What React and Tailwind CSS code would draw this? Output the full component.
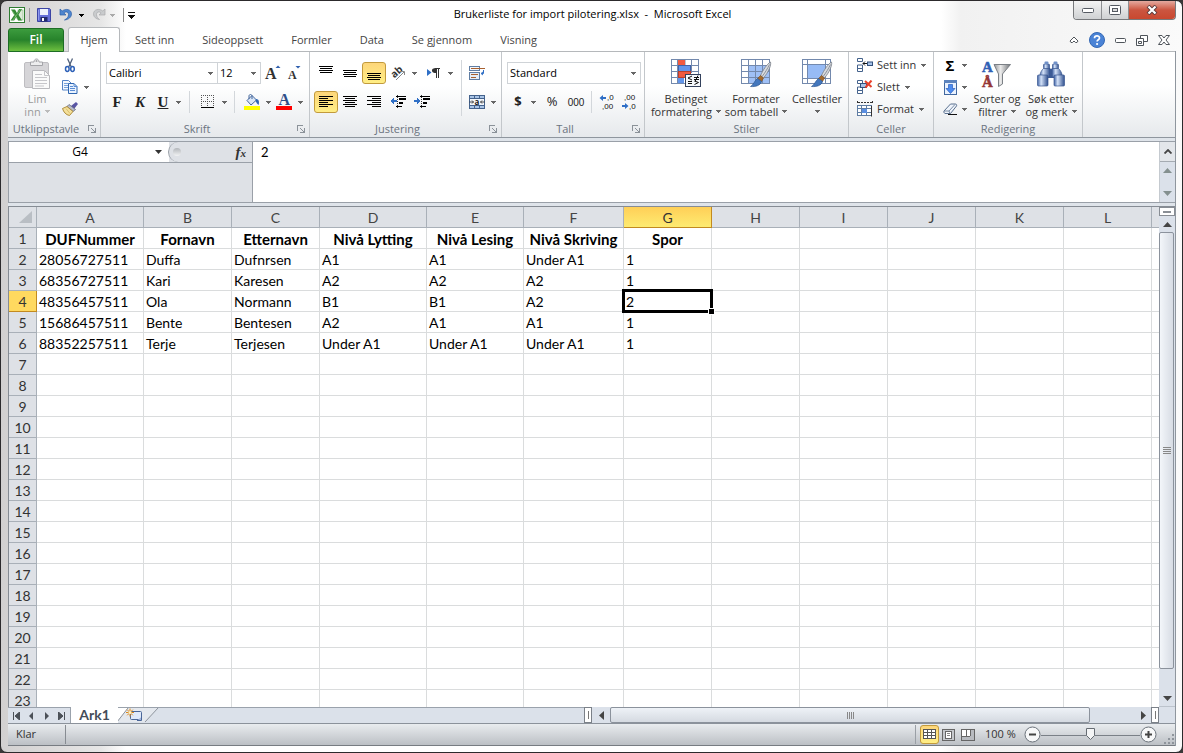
import React from "react";

const Caret = ({ className = "text-[#666]" }) => (
  <svg viewBox="0 0 5 3" shapeRendering="crispEdges" className={"h-[3px] w-[5px] shrink-0 " + className} aria-hidden="true">
    <path d="M0 0h5v1H4v1H3v1H2V2H1V1H0z" fill="currentColor" />
  </svg>
);

const Tri = ({ dir }) => {
  const d = { up: "M4.500 1L9 6H0z", down: "M0 1h9L4.500 6z", left: "M6 0v9L1 4.500z", right: "M1 0v9l5-4.500z" }[dir];
  return (
    <svg width="9" height="9" viewBox={dir === "up" || dir === "down" ? "0 -1 9 9" : "-1 0 9 9"} aria-hidden="true">
      <path d={d} fill="currentColor" />
    </svg>
  );
};

const Tool = ({ label, className = "w-6", active, children }) => (
  <button
    type="button"
    aria-label={label}
    className={
      "flex h-[22px] shrink-0 items-center justify-center rounded-[3px] border " +
      (active ? "border-[#c29a3c] bg-linear-to-b from-[#fdd67a] to-[#ffee85] " : "border-transparent ") +
      className
    }
  >
    {children}
  </button>
);

const Drop = ({ label }) => (
  <button type="button" aria-label={label} className="flex h-[22px] w-2 shrink-0 items-center justify-center">
    <Caret />
  </button>
);

const Sep = ({ className }) => (
  <div className={"flex h-[22px] shrink-0 justify-center " + className}>
    <div className="w-px bg-[#d3d7db]" />
  </div>
);

const Group = ({ title, launcher, className, pad = "", children }) => (
  <section className={"flex shrink-0 flex-col border-r border-[#c3c7cb] " + className}>
    <div className={"flex h-[69px] " + pad}>{children}</div>
    <div className="flex h-4 items-center">
      <span className="flex-1 text-center whitespace-nowrap text-[#6b7480]">{title}</span>
      {launcher && (
        <button type="button" aria-label={title + " innstillinger"} className="flex w-4 justify-center">
          <svg width="8" height="8" viewBox="0 0 8 8" shapeRendering="crispEdges">
            <path d="M0.500 6V0.500H6M3 3l4 4M7.500 3v4.500H3" fill="none" stroke="#8b9299" />
          </svg>
        </button>
      )}
    </div>
  </section>
);

const Big = ({ icon, a, b, drop, className, muted }) => (
  <button type="button" className={"flex shrink-0 flex-col items-center pt-1 leading-[13px] whitespace-nowrap " + className + (muted ? " text-[#9a9a9a]" : " text-[#333]")}>
    <span className="flex h-9 items-center">{icon}</span>
    <span>{a}</span>
    <span className="flex h-[13px] items-center gap-1">
      {b}
      {drop && <Caret className={muted ? "text-[#bbb]" : "text-[#666]"} />}
    </span>
  </button>
);

const Select = ({ label, value, className }) => (
  <div className={"flex h-[22px] items-center border border-[#cfd3d7] bg-white pr-1 " + className}>
    <select aria-label={label} defaultValue={value} className="-mr-2 min-w-0 flex-1 appearance-none bg-transparent pl-[2px] text-[11px] text-black outline-none">
      <option>{value}</option>
    </select>
    <span className="pointer-events-none"><Caret /></span>
  </div>
);

const Lines = ({ rows, y = 2 }) => (
  <svg width="16" height="16" viewBox="0 0 16 16" shapeRendering="crispEdges">
    {rows.map(([x, w], i) => (
      <rect key={i} x={x} y={y + i * 2} width={w} height="1" fill="#000" />
    ))}
  </svg>
);

const brushStroke = (
  <>
    <path d="M30.500 3c1 3-2 10-7 16l-3-2.500C23 11 27 5 30.500 3z" fill="#d8dbe0" stroke="#777d86" strokeWidth="0.800" />
    <path d="M29.500 5.500c-2 4-4 7.500-7 11.500" stroke="#8d929a" fill="none" />
    <path d="M20.500 16.500l3 2.500-2 3.500-4-3z" fill="#a36a2d" stroke="#7a4c1c" strokeWidth="0.600" />
    <path d="M17.500 19.500l4 3c-1 4-6 5.500-11 5 3-1.500 4-6 7-8z" fill="#4377bd" stroke="#2e5791" strokeWidth="0.700" />
  </>
);

const I = {
  excel: (
    <svg width="16" height="16" viewBox="0 0 16 16">
      <rect x="0.500" y="0.500" width="15" height="15" fill="#fff" stroke="#2f7d32" />
      <rect x="9" y="3" width="5" height="10" fill="#dcebd8" stroke="#7eaf79" strokeWidth="0.600" />
      <path d="M2 2.500h4l2 3.400 2.200-3.900H13L9.500 7.800 13 13.500H9.300L7.200 10l-2 3.500H1.500L5.300 8z" fill="#348a35" />
      <path d="M3 3.500L8.500 12.500M11.500 2.500L4 13" stroke="#8bc47f" strokeWidth="0.700" />
    </svg>
  ),
  save: (
    <svg width="14" height="14" viewBox="0 0 14 14">
      <path d="M0.500 0.500h12l1 1v12h-13z" fill="#6570d8" stroke="#3c44a4" />
      <rect x="3" y="1" width="8" height="6" fill="#edf2fb" />
      <rect x="3.500" y="9" width="7" height="4.500" fill="#222a6a" />
      <rect x="5" y="10" width="2" height="3" fill="#fff" />
      <path d="M1.500 2v10" stroke="#8f97ea" />
    </svg>
  ),
  undo: (
    <svg width="14" height="14" viewBox="0 0 14 14">
      <path d="M1 1v6h6L4.900 4.900C7 3 9.500 4 9.500 6.500c0 2.500-1.500 4-4 5.500 4.500-.5 7-3 7-6.200C12.500 1.500 7 0 3.200 3z" fill="#4f86cf" stroke="#2d5ea8" strokeWidth="0.700" />
    </svg>
  ),
  redo: (
    <svg width="14" height="14" viewBox="0 0 14 14">
      <path d="M13 1v6H7l2.100-2.100C7 3 4.500 4 4.500 6.500c0 2.500 1.500 4 3 5C4 11 1.500 9 1.500 5.800 1.500 1.500 7 0 10.800 3z" fill="#c9cbcd" stroke="#a9abad" strokeWidth="0.700" />
    </svg>
  ),
  paste: (
    <svg width="28" height="32" viewBox="0 0 28 32">
      <rect x="1.500" y="4.500" width="24" height="25" rx="1.500" fill="#d6d5d8" stroke="#bebdc1" />
      <path d="M7.500 7.500V4h3.500c0-4 5-4 5 0h3.500v3.500z" fill="#ededee" stroke="#a4a4a8" />
      <circle cx="13.500" cy="3" r="1" fill="#a4a4a8" />
      <path d="M9.500 12.500h12l5 5v13h-17z" fill="#fafafa" stroke="#b9b9bd" />
      <path d="M21.500 12.500v5h5M12 16.500h7M12 19.500h12M12 22.500h12M12 25.500h12M12 28h9" fill="none" stroke="#c6c6ca" />
    </svg>
  ),
  cut: (
    <svg width="12" height="15" viewBox="0 0 12 15">
      <path d="M3.500 0.500l3.800 8.500M8.500 0.500L4.700 9" stroke="#51617c" strokeWidth="1.300" fill="none" />
      <ellipse cx="3.300" cy="11" rx="1.800" ry="2.400" fill="none" stroke="#2f62b8" strokeWidth="1.500" />
      <ellipse cx="8.500" cy="11" rx="1.800" ry="2.400" fill="none" stroke="#2f62b8" strokeWidth="1.500" />
    </svg>
  ),
  copy: (
    <svg width="16" height="14" viewBox="0 0 16 14">
      <path d="M0.500 0.500h6l2.500 2.500v7h-8.500z" fill="#f3f8ff" stroke="#5584c6" />
      <path d="M2 3.500h4M2 5.500h4M2 7.500h4" stroke="#79a3dc" />
      <path d="M6.500 3.500h5.500l3 3v7H6.500z" fill="#eaf3ff" stroke="#2f66b0" />
      <path d="M8 6.500h3M8 8.500h5M8 10.500h5M12 3.500v3h3" stroke="#5b8dd4" fill="none" />
    </svg>
  ),
  brush: (
    <svg width="16" height="14" viewBox="0 0 16 14">
      <path d="M9 4l5-4 2 2-4 5z" fill="#5955a3" />
      <path d="M7 2.500l6.500 5L11 9.500 5 4.500z" fill="#b9bcc9" stroke="#5f6478" strokeWidth="0.800" />
      <path d="M5 4.500L11 9.500 7.500 13.500C4 13 1.500 10 0.500 6.500z" fill="#f4e09a" stroke="#a88430" strokeWidth="0.900" />
      <path d="M4 6.500l4 5" stroke="#c9a44c" strokeWidth="0.600" />
    </svg>
  ),
  borders: (
    <svg width="14" height="14" viewBox="0 0 14 14" shapeRendering="crispEdges">
      <path d="M0.500 0v12M6.500 0v12M12.500 0v12M0 0.500h13M0 6.500h13" stroke="#555" strokeDasharray="1 1" fill="none" />
      <rect y="12" width="13" height="1" fill="#000" />
    </svg>
  ),
  fill: (
    <svg width="16" height="16" viewBox="0 0 16 16">
      <path d="M3 6.500L8 1.500 12.500 6 7 11z" fill="#d9e6f7" stroke="#44679c" />
      <path d="M5 5V2c0-2 3-2 3 0v3" fill="none" stroke="#44679c" />
      <path d="M12 5c3 0 3.500 3 2.500 6-1-1-2-2-3-4z" fill="#2f67b5" />
      <rect y="12" width="16" height="4" fill="#ffff00" />
    </svg>
  ),
  orient: (
    <svg width="16" height="16" viewBox="0 0 16 16" className="overflow-visible">
      <text x="1" y="11" fontSize="10" fontWeight="700" fontFamily="Open Sans, sans-serif" transform="rotate(-42 6 8)" fill="#333">ab</text>
      <path d="M6 15L14 7M14.500 10V6.500H11" stroke="#888" fill="none" />
    </svg>
  ),
  para: (
    <svg width="14" height="12" viewBox="0 0 14 12">
      <path d="M0 2l4.500 3.500L0 9z" fill="#2f6fc6" />
      <path d="M8 1.500h5M9.500 2v9M11.500 2v9" stroke="#333" />
      <path d="M9.500 1C6 1 5 2 5 3.700 5 5.500 6.500 6 9.500 6z" fill="#333" />
    </svg>
  ),
  indentOut: (
    <svg width="16" height="14" viewBox="0 0 16 14" shapeRendering="crispEdges">
      <path d="M6 1.500h10M9 3.500h7M9 4.500h7M9 7.500h4M9 8.500h4M6 11.500h6" stroke="#000" />
      <path d="M7.500 0v14" stroke="#333" strokeDasharray="1 1" />
      <path d="M0 6l4-3v2h3v2H4v2z" fill="#2f6fc6" />
    </svg>
  ),
  indentIn: (
    <svg width="16" height="14" viewBox="0 0 16 14" shapeRendering="crispEdges">
      <path d="M6 1.500h10M9 3.500h7M9 4.500h7M9 7.500h4M9 8.500h4M6 11.500h6" stroke="#000" />
      <path d="M7.500 0v14" stroke="#333" strokeDasharray="1 1" />
      <path d="M7 6L3 3v2H0v2h3v2z" fill="#2f6fc6" />
    </svg>
  ),
  wrap: (
    <svg width="17" height="16" viewBox="0 0 17 16">
      <rect x="0.500" y="1.500" width="10" height="4" fill="#f4f7fb" stroke="#5f7da3" />
      <path d="M2 3.500h14" stroke="#a8602f" />
      <path d="M14.500 5v3.500H12.500M14 7l-2 1.500 2 1.500" stroke="#2f6fc6" fill="none" />
      <rect x="0.500" y="7.500" width="10" height="7" fill="#e3edf8" stroke="#5f7da3" />
      <path d="M2 9.500h7M2 12.500h5" stroke="#a8602f" />
    </svg>
  ),
  merge: (
    <svg width="16" height="14" viewBox="0 0 16 14" className="overflow-visible">
      <rect x="0.500" y="0.500" width="15" height="13" fill="#a9c4e6" stroke="#44628c" />
      <path d="M5.500 1v2M10.500 1v2M5.500 11v2M10.500 11v2M1 3.500h14M1 10.500h14" stroke="#44628c" />
      <rect x="1" y="4" width="14" height="6" fill="#f2f6fb" />
      <path d="M0.500 7h4M11.500 7h4M3 5.500L4.500 7 3 8.500M13 5.500L11.500 7 13 8.500" stroke="#333" fill="none" strokeWidth="0.900" />
      <text x="8" y="9.500" textAnchor="middle" fontSize="8" fontWeight="700" fontFamily="Open Sans, sans-serif" fill="#222">a</text>
    </svg>
  ),
  decMore: (
    <svg width="17" height="16" viewBox="0 0 17 16" className="overflow-visible">
      <path d="M0.500 4l3.500-3v2h3v2H4v2z" fill="#2f6fc6" />
      <text x="8" y="6" fontSize="8" fontFamily="Liberation Sans, sans-serif" fill="#111">,0</text>
      <text x="3" y="15" fontSize="8" fontFamily="Liberation Sans, sans-serif" fill="#111">,00</text>
    </svg>
  ),
  decLess: (
    <svg width="17" height="16" viewBox="0 0 17 16" className="overflow-visible">
      <path d="M7.500 12L4 9v2H1v2h3v2z" fill="#2f6fc6" />
      <text x="3" y="6" fontSize="8" fontFamily="Liberation Sans, sans-serif" fill="#111">,00</text>
      <text x="8" y="15" fontSize="8" fontFamily="Liberation Sans, sans-serif" fill="#111">,0</text>
    </svg>
  ),
  cond: (
    <svg width="32" height="30" viewBox="0 0 32 30">
      <rect x="1.500" y="0.500" width="27" height="24" fill="#fff" stroke="#7389ad" />
      <path d="M7.500 0v25M15 0.500v6M21.500 0v14M1 6.500h28M1 12.500h28M1 18.500h14" stroke="#7389ad" fill="none" />
      <rect x="8" y="1" width="7" height="5" fill="#f05a40" />
      <rect x="8.500" y="6.500" width="12" height="6" fill="#6295ea" stroke="#3f62a8" />
      <rect x="8.500" y="12.500" width="12" height="6" fill="#f05a40" stroke="#b8402c" />
      <rect x="8" y="19" width="6" height="5" fill="#6295ea" />
      <rect x="15.500" y="15.500" width="15" height="12" fill="#f5f8fc" stroke="#33415c" />
      <path d="M22 17l-4 2 4 2M18 22.500h4M18 24.500h4M24 18.500h5M24 20.500h5M28 16.500l-3 6M24.500 22l4 1.500-4 2" stroke="#111" fill="none" />
    </svg>
  ),
  tableFmt: (
    <svg width="32" height="30" viewBox="0 0 32 30">
      <rect x="1.500" y="0.500" width="28" height="24" fill="#fff" stroke="#7389ad" />
      <rect x="8" y="7" width="21" height="17" fill="#9fc0f6" />
      <path d="M8.500 0v25M15.500 0v25M22.500 0v25M1 6.500h28M1 12.500h28M1 18.500h28" stroke="#7389ad" fill="none" />
      {brushStroke}
    </svg>
  ),
  cellStyle: (
    <svg width="32" height="30" viewBox="0 0 32 30">
      <rect x="1.500" y="0.500" width="28" height="24" fill="#fff" stroke="#7389ad" />
      <path d="M6.500 0v25M24.500 0v25M1 5.500h28M1 19.500h28" stroke="#7389ad" fill="none" />
      <rect x="7" y="6" width="17" height="13" fill="#97bbf5" />
      {brushStroke}
    </svg>
  ),
  insert: (
    <svg width="16" height="14" viewBox="0 0 16 14">
      <path d="M0.500 0.500h5v3h-5zM0.500 10.500h5v3h-5zM0.500 7h5v3.500h-5z" fill="#fff" stroke="#44628c" />
      <path d="M6 5.500h4M8 3.500L6 5.500l2 2" stroke="#111" fill="none" />
      <rect x="10.500" y="4" width="5" height="3.500" fill="#a7c3e8" stroke="#33517c" />
    </svg>
  ),
  remove: (
    <svg width="16" height="14" viewBox="0 0 16 14">
      <path d="M0.500 0.500h5v3h-5zM0.500 10.500h5v3h-5zM0.500 7h5v3.500h-5z" fill="#fff" stroke="#44628c" />
      <rect x="3.500" y="3.500" width="6" height="4" fill="#a7c3e8" stroke="#33517c" />
      <path d="M8 1l6.500 6M14.500 0.500L8.500 7.500" stroke="#e8402a" strokeWidth="2" />
    </svg>
  ),
  format: (
    <svg width="16" height="16" viewBox="0 0 16 16">
      <path d="M1 1.500h14M0.500 0v3M15.500 0v3" stroke="#333" strokeDasharray="2 1" />
      <rect x="0.500" y="4.500" width="14" height="10" fill="#fff" stroke="#5f7da3" />
      <path d="M4.500 4v11M9.500 4v11M0 7.500h15M0 11.500h15" stroke="#5f7da3" />
      <rect x="5" y="8" width="5" height="4" fill="#5b8fe2" />
      <path d="M14.500 5v10.500" stroke="#333" />
    </svg>
  ),
  fillDown: (
    <svg width="13" height="15" viewBox="0 0 13 15">
      <rect x="0.500" y="0.500" width="12" height="14" fill="#eaf2fd" stroke="#42689f" />
      <rect x="0" y="0" width="13" height="3" fill="#5c83bd" />
      <path d="M4.500 4.500h4v4H11l-4.500 5-4.500-5h2.500z" fill="#4c8bef" stroke="#2a5fbe" strokeWidth="0.700" />
    </svg>
  ),
  eraser: (
    <svg width="15" height="13" viewBox="0 0 15 13">
      <path d="M1 8l6.500-7h5c1 0 1.500 1 1 2L7.500 10.500 2 10.500C1 10 0.500 9 1 8z" fill="#eff4fb" stroke="#5b718f" />
      <path d="M1 8h5l6-6.500M6 8l1 2.500" stroke="#5b718f" fill="none" strokeWidth="0.800" />
      <path d="M5 11.500h9" stroke="#111" />
    </svg>
  ),
  sort: (
    <svg width="32" height="30" viewBox="0 0 32 30" className="overflow-visible">
      <defs>
        <linearGradient id="funnel" x1="0" x2="1" y1="0" y2="0">
          <stop offset="0" stopColor="#8f9296" />
          <stop offset="0.400" stopColor="#ececec" />
          <stop offset="1" stopColor="#6f7276" />
        </linearGradient>
      </defs>
      <path d="M13 5.500h16.500l-8 9.500v10l-4 2.500V15z" fill="url(#funnel)" stroke="#7b8086" />
      <text x="1" y="13" fontSize="15" fontWeight="700" fontFamily="Liberation Serif, serif" fill="#2f5fb4" stroke="#2f5fb4" strokeWidth="0.500">A</text>
      <text x="1" y="28" fontSize="15" fontWeight="700" fontFamily="Liberation Serif, serif" fill="#943636" stroke="#943636" strokeWidth="0.500">Å</text>
    </svg>
  ),
  find: (
    <svg width="28" height="26" viewBox="0 0 28 26">
      <defs>
        <linearGradient id="barrel" x1="0" x2="1" y1="0" y2="0">
          <stop offset="0" stopColor="#3f62a4" />
          <stop offset="0.350" stopColor="#d3e1f7" />
          <stop offset="1" stopColor="#2f4f8e" />
        </linearGradient>
      </defs>
      <path d="M11 8h6v9h-6z" fill="#3c5c98" />
      <path d="M7 7h6v9H2.500C3 12 4.500 9 7 7z" fill="url(#barrel)" stroke="#3a5890" strokeWidth="0.700" />
      <path d="M21 7h-6v9h10.500C25 12 23.500 9 21 7z" fill="url(#barrel)" stroke="#3a5890" strokeWidth="0.700" />
      <rect x="6.500" y="3" width="6" height="4.500" rx="1" fill="url(#barrel)" stroke="#3a5890" strokeWidth="0.700" />
      <rect x="15.500" y="3" width="6" height="4.500" rx="1" fill="url(#barrel)" stroke="#3a5890" strokeWidth="0.700" />
      <rect x="7.500" y="0.500" width="4" height="2.500" rx="1" fill="#6f90c8" />
      <rect x="16.500" y="0.500" width="4" height="2.500" rx="1" fill="#6f90c8" />
      <rect x="0.500" y="14" width="10.500" height="11" rx="1" fill="url(#barrel)" stroke="#3a5890" strokeWidth="0.700" />
      <rect x="17" y="14" width="10.500" height="11" rx="1" fill="url(#barrel)" stroke="#3a5890" strokeWidth="0.700" />
    </svg>
  ),
};

const columns = ["A", "B", "C", "D", "E", "F", "G", "H", "I", "J", "K", "L"];
const widths = ["w-[107px]", "w-[88px]", "w-[88px]", "w-[107px]", "w-[97px]", "w-[100px]", "w-[88px]", "w-[88px]", "w-[88px]", "w-[88px]", "w-[88px]", "w-[88px]"];
const data = [
  ["DUFNummer", "Fornavn", "Etternavn", "Nivå Lytting", "Nivå Lesing", "Nivå Skriving", "Spor"],
  ["28056727511", "Duffa", "Dufnrsen", "A1", "A1", "Under A1", "1"],
  ["68356727511", "Kari", "Karesen", "A2", "A2", "A2", "1"],
  ["48356457511", "Ola", "Normann", "B1", "B1", "A2", "2"],
  ["15686457511", "Bente", "Bentesen", "A2", "A1", "A1", "1"],
  ["88352257511", "Terje", "Terjesen", "Under A1", "Under A1", "Under A1", "1"],
];
const rowNumbers = Array.from({ length: 23 }, (_, i) => i + 1);

function TitleBar() {
  const winBtn = "flex h-full items-center justify-center border-r border-[#8d8f92] bg-linear-to-b from-[#f4f4f4] to-[#cfd1d3]";
  return (
    <header className="flex h-[26px] items-start">
      <div className="flex h-[27px] flex-1 items-center pt-px pl-px">
        {I.excel}
        <div className="mr-[7px] ml-1 h-3.5 w-px bg-[#999]" />
        <button type="button" aria-label="Lagre">{I.save}</button>
        <button type="button" aria-label="Angre" className="ml-2">{I.undo}</button>
        <button type="button" aria-label="Angre-liste" className="ml-1.5"><Caret className="text-black" /></button>
        <button type="button" aria-label="Gjør om" className="ml-2">{I.redo}</button>
        <button type="button" aria-label="Gjør om-liste" className="ml-1"><Caret className="text-[#aaa]" /></button>
        <div className="mr-1 ml-2 h-3.5 w-px bg-[#888]" />
        <button type="button" aria-label="Tilpass verktøylinje">
          <svg width="7" height="7" viewBox="0 0 7 7" shapeRendering="crispEdges"><path d="M0 0h7v1H0zM0 3h7L3.500 7z" fill="#111" /></svg>
        </button>
      </div>
      <h1 className="pt-[5px] text-[11px] leading-4 whitespace-pre text-black">Brukerliste for import pilotering.xlsx  -  Microsoft Excel</h1>
      <div className="flex flex-1 justify-end">
        <div className="flex h-[19px] w-[103px] overflow-hidden rounded-b-[4px] border border-t-0 border-[#77797c]">
          <button type="button" aria-label="Minimer" className={"w-7 " + winBtn}>
            <svg width="12" height="5" viewBox="0 0 12 5"><rect x="0.500" y="0.500" width="11" height="4" rx="1" fill="#fff" stroke="#555a62" /></svg>
          </button>
          <button type="button" aria-label="Maksimer" className={"w-[27px] " + winBtn}>
            <svg width="12" height="10" viewBox="0 0 12 10"><rect x="0.500" y="0.500" width="11" height="9" rx="1" fill="#fff" stroke="#555a62" /><rect x="3.500" y="3.500" width="5" height="3" fill="#ddd" stroke="#555a62" /></svg>
          </button>
          <button type="button" aria-label="Lukk" className="flex flex-1 items-center justify-center bg-linear-to-b from-[#e3a99f] via-[#cb5540] to-[#c9482f]">
            <svg width="12" height="10" viewBox="0 0 12 10"><path d="M2 1l8 8M10 1L2 9" stroke="#5b3a3a" strokeWidth="4" /><path d="M2.500 1.500l7 7M9.500 1.500l-7 7" stroke="#fff" strokeWidth="2.200" /></svg>
          </button>
        </div>
      </div>
    </header>
  );
}

function Tabs() {
  return (
    <nav className="relative z-10 -mb-px flex h-[25px] items-end">
      <button type="button" className="mr-1 h-6 w-14 rounded-t-[3px] border border-[#1d6d24] bg-linear-to-b from-[#3c9c3e] via-[#27832b] to-[#6cbf3f] text-[12px] font-semibold text-white">Fil</button>
      <button type="button" className="mr-px h-[25px] w-[52px] rounded-t-[3px] border border-b-0 border-[#b5b8bb] bg-white">Hjem</button>
      {["Sett inn", "Sideoppsett", "Formler", "Data", "Se gjennom", "Visning"].map((t) => (
        <button key={t} type="button" className="h-[25px] px-3.5 pt-px">{t}</button>
      ))}
      <div className="ml-auto flex h-6 items-center gap-2.5 pr-1.5">
        <button type="button" aria-label="Minimer båndet"><svg width="10" height="8" viewBox="0 0 10 8"><path d="M5 1l4 4-1 1.500H6.500L5 5 3.500 6.500H2L1 5z" fill="#fff" stroke="#4f545a" /></svg></button>
        <button type="button" aria-label="Hjelp">
          <svg width="16" height="16" viewBox="0 0 16 16"><circle cx="8" cy="8" r="7.500" fill="#4a83d6" stroke="#3468b4" /><path d="M5.500 6.200c0-3 5-3 5-.2 0 1.800-2.400 1.800-2.400 3.600" stroke="#fff" strokeWidth="1.700" fill="none" /><circle cx="8.100" cy="12" r="1.100" fill="#fff" /></svg>
        </button>
        <button type="button" aria-label="Minimer arbeidsbok"><svg width="11" height="5" viewBox="0 0 11 5"><rect x="0.500" y="0.500" width="10" height="4" rx="1" fill="#fff" stroke="#4f545a" /></svg></button>
        <button type="button" aria-label="Gjenopprett arbeidsbok"><svg width="12" height="11" viewBox="0 0 12 11"><path d="M4.500 0.500h7v6h-7z" fill="#fff" stroke="#4f545a" /><path d="M0.500 3.500h7v7h-7z" fill="#fff" stroke="#4f545a" /><path d="M2.500 6.500h3v2h-3z" fill="none" stroke="#4f545a" /></svg></button>
        <button type="button" aria-label="Lukk arbeidsbok"><svg width="12" height="10" viewBox="0 0 12 10"><path d="M0.500 0.500h3.500L6 3l2-2.500h3.500L8 5l3.500 4.500H8L6 7 4 9.500H0.500L4 5z" fill="#fff" stroke="#4f545a" /></svg></button>
      </div>
    </nav>
  );
}

function Ribbon() {
  const rows = "flex flex-col gap-[7px] pt-[10px]";
  return (
    <div className="flex h-[87px] border-t border-b border-t-[#b5b8bb] border-b-[#8f969e] bg-linear-to-b from-white from-40% to-[#e6e9ec]">
      <Group title="Utklippstavle" launcher className="w-[93px]">
        <Big icon={I.paste} a="Lim" b="inn" drop muted className="ml-2 w-[42px]" />
        <div className="flex flex-col pt-[2px]">
          <div className="flex"><Tool label="Klipp ut">{I.cut}</Tool></div>
          <div className="flex"><Tool label="Kopier">{I.copy}</Tool><Drop label="Kopier-valg" /></div>
          <div className="flex"><Tool label="Kopier format">{I.brush}</Tool></div>
        </div>
      </Group>

      <Group title="Skrift" launcher className="w-[209px]" pad="pl-[5px]">
        <div className={rows}>
          <div className="flex">
            <Select label="Skrift" value="Calibri" className="w-[112px]" />
            <Select label="Skriftstørrelse" value="12" className="-ml-px w-[44px]" />
            <Tool label="Større skrift" className="ml-px w-[22px]">
              <svg width="16" height="16" viewBox="0 0 16 16" className="overflow-visible"><text x="0" y="14" fontSize="16" fontWeight="700" fontFamily="Liberation Serif, serif" fill="#333">A</text><path d="M10.500 3L13 0.500 15.500 3z" fill="#2f5fae" /></svg>
            </Tool>
            <Tool label="Mindre skrift" className="w-5">
              <svg width="14" height="16" viewBox="0 0 14 16" className="overflow-visible"><text x="1" y="14" fontSize="12" fontWeight="700" fontFamily="Liberation Serif, serif" fill="#333">A</text><path d="M8.500 1h5L11 3.500z" fill="#2f5fae" /></svg>
            </Tool>
          </div>
          <div className="flex font-['Liberation_Serif',serif] text-[15px] leading-5 font-bold text-[#222]">
            <Tool label="Fet" className="w-[22px]">F</Tool>
            <Tool label="Kursiv"><i>K</i></Tool>
            <Tool label="Understreking" className="w-[22px]"><u>U</u></Tool>
            <Drop label="Understrekingsvalg" />
            <Sep className="w-3.5" />
            <Tool label="Kantlinjer">{I.borders}</Tool>
            <Drop label="Kantlinjevalg" />
            <Sep className="w-3" />
            <Tool label="Fyllfarge">{I.fill}</Tool>
            <Drop label="Fyllfargevalg" />
            <Tool label="Skriftfarge">
              <svg width="16" height="16" viewBox="0 0 16 16" className="overflow-visible"><text x="2.500" y="11" fontSize="16" fontWeight="700" fontFamily="Liberation Serif, serif" fill="#2f4f8a">A</text><rect y="12" width="16" height="4" fill="#f00" /></svg>
            </Tool>
            <Drop label="Skriftfargevalg" />
          </div>
        </div>
      </Group>

      <Group title="Justering" launcher className="w-48" pad="pl-1">
        <div className={rows + " w-[144px]"}>
          <div className="flex">
            <Tool label="Toppjuster"><Lines y={1} rows={[[1, 14], [2, 12], [1, 14], [2, 12]]} /></Tool>
            <Tool label="Midtjuster loddrett"><Lines y={5} rows={[[1, 14], [2, 12], [1, 14], [2, 12]]} /></Tool>
            <Tool label="Bunnjuster" active><Lines y={8} rows={[[1, 14], [2, 12], [1, 14], [2, 12]]} /></Tool>
            <Tool label="Retning">{I.orient}</Tool>
            <Drop label="Retningsvalg" />
            <Tool label="Tekstretning" className="ml-1 w-6">{I.para}</Tool>
            <Drop label="Tekstretningsvalg" />
          </div>
          <div className="flex">
            <Tool label="Venstrejuster" active><Lines rows={[[1, 14], [1, 9], [1, 14], [1, 9], [1, 14], [1, 9]]} /></Tool>
            <Tool label="Midtstill"><Lines rows={[[1, 14], [3, 10], [1, 14], [3, 10], [1, 14], [3, 10]]} /></Tool>
            <Tool label="Høyrejuster"><Lines rows={[[1, 14], [6, 9], [1, 14], [6, 9], [1, 14], [6, 9]]} /></Tool>
            <Tool label="Mindre innrykk">{I.indentOut}</Tool>
            <Tool label="Mer innrykk">{I.indentIn}</Tool>
          </div>
        </div>
        <div className="mt-2 mr-[3px] ml-[3px] h-14 w-px bg-[#d3d7db]" />
        <div className={rows}>
          <Tool label="Bryt tekst">{I.wrap}</Tool>
          <div className="flex"><Tool label="Slå sammen">{I.merge}</Tool><Drop label="Slå sammen-valg" /></div>
        </div>
      </Group>

      <Group title="Tall" launcher className="w-[143px]" pad="pl-[5px]">
        <div className={rows}>
          <Select label="Tallformat" value="Standard" className="w-[134px]" />
          <div className="flex text-[#222]">
            <Tool label="Valuta" className="w-[22px]"><b className="text-[13px]">$</b></Tool>
            <Drop label="Valutavalg" />
            <Tool label="Prosent" className="ml-px w-7"><span className="text-[13px]">%</span></Tool>
            <Tool label="Tusenskille" className="w-5"><span className="font-['Liberation_Sans',sans-serif] text-[10px]">000</span></Tool>
            <Sep className="w-2.5" />
            <Tool label="Flere desimaler" className="w-[22px]">{I.decMore}</Tool>
            <Tool label="Færre desimaler" className="w-[22px]">{I.decLess}</Tool>
          </div>
        </div>
      </Group>

      <Group title="Stiler" className="w-[204px]" pad="pl-1">
        <Big icon={I.cond} a="Betinget" b="formatering" drop className="w-[74px]" />
        <Big icon={I.tableFmt} a="Formater" b="som tabell" drop className="w-[66px]" />
        <Big icon={I.cellStyle} a="Cellestiler" b="" drop className="w-14" />
      </Group>

      <Group title="Celler" className="w-[85px]" pad="pl-2">
        <div className="flex flex-col pt-[2px] text-[#333]">
          {[["Sett inn", I.insert], ["Slett", I.remove], ["Format", I.format]].map(([t, icon]) => (
            <button key={t} type="button" className="flex h-[22px] items-center gap-1 whitespace-nowrap">
              {icon}
              <span className="mr-px">{t}</span>
              <Caret />
            </button>
          ))}
        </div>
      </Group>

      <Group title="Redigering" className="w-[149px]" pad="pl-1.5">
        <div className="flex w-[30px] flex-col pt-[2px]">
          <div className="flex"><Tool label="Autosummer" className="w-5"><b className="text-[15px] text-black">Σ</b></Tool><Drop label="Summeringsvalg" /></div>
          <div className="flex"><Tool label="Fyll" className="w-5">{I.fillDown}</Tool><Drop label="Fyllvalg" /></div>
          <div className="flex"><Tool label="Fjern" className="w-5">{I.eraser}</Tool><Drop label="Fjernvalg" /></div>
        </div>
        <Big icon={I.sort} a="Sorter og" b="filtrer" drop className="w-[54px]" />
        <Big icon={I.find} a="Søk etter" b="og merk" drop className="w-[54px]" />
      </Group>
    </div>
  );
}

function FormulaBar() {
  return (
    <div className="mt-[3px] flex h-[62px] border-y border-l border-[#9aa0a8]">
      <div className="w-[244px] shrink-0 border-r border-[#9aa0a8] bg-[#dee1e6]">
        <div className="flex h-[21px] items-center border-b border-[#9aa0a8]">
          <div className="flex h-full w-[160px] items-center bg-white pr-[7px]">
            <input aria-label="Navneboks" defaultValue="G4" className="min-w-0 flex-1 bg-transparent pr-1 text-center text-[12px] text-black outline-none" />
            <svg width="7" height="4" viewBox="0 0 7 4"><path d="M0 0h7L3.500 4z" fill="#333" /></svg>
          </div>
          <div className="-ml-px flex h-full flex-1 items-center justify-between rounded-l-full border-l border-[#9aa0a8] bg-[#dee1e6] pr-1.5 pl-1">
            <span className="h-2 w-2 rounded-full bg-linear-to-b from-[#b2b6ba] to-[#f2f3f4]" />
            <button type="button" aria-label="Sett inn funksjon" className="font-['Liberation_Serif',serif] text-[15px] leading-4 font-bold text-[#333] italic">
              f<span className="text-[11px]">x</span>
            </button>
          </div>
        </div>
      </div>
      <div className="flex-1 bg-white px-2 pt-[2px]">
        <input aria-label="Formellinje" defaultValue="2" className="block w-full bg-transparent font-[Lato,sans-serif] text-[13px] leading-4 text-black outline-none" />
      </div>
      <div className="flex w-4 flex-col items-center border-l border-[#c5cad0] bg-[#dbe1ea] text-[#84908f]">
        <button type="button" aria-label="Skjul formellinje" className="flex h-5 w-full items-center justify-center border-b border-[#a5abb2] bg-[#e3e6ea]">
          <svg width="8" height="5" viewBox="0 0 8 5"><path d="M0.500 4.500L4 1l3.500 3.500" fill="none" stroke="#444" strokeWidth="1.800" /></svg>
        </button>
        <button type="button" aria-label="Forrige linje" className="pt-1"><Tri dir="up" /></button>
        <button type="button" aria-label="Neste linje" className="mt-auto pb-1"><Tri dir="down" /></button>
      </div>
    </div>
  );
}

function Sheet() {
  const head = "border-r border-b border-[#a9b0b8] font-normal";
  return (
    <div className="mt-[3px] flex min-h-0 flex-1 overflow-hidden border-t border-l border-[#868c94]">
      <div className="min-w-0 flex-1 overflow-hidden bg-white">
        <table className="w-full table-fixed border-separate border-spacing-0 font-[Lato,sans-serif] text-[14px] leading-[18px] text-black">
          <colgroup>
            <col className="w-7" />
            {widths.map((w, i) => <col key={i} className={w} />)}
            <col />
          </colgroup>
          <thead>
            <tr>
              <th aria-label="Merk alt" className={"h-[21px] bg-[#dee1e6] p-0 " + head}>
                <svg width="13" height="12" viewBox="0 0 13 12" className="mr-1 ml-auto"><path d="M13 0v12H0z" fill="#b9bec4" /></svg>
              </th>
              {columns.map((c) => (
                <th key={c} scope="col" className={"h-[21px] p-0 pt-[2px] " + (c === "G" ? "border-r border-b border-[#c28a20] bg-linear-to-b from-[#ffcf57] to-[#fdeb71] font-normal text-[#333]" : "bg-[#dee1e6] text-[#444] " + head)}>{c}</th>
              ))}
              <td className="border-b border-[#a9b0b8] bg-[#dee1e6] p-0" />
            </tr>
          </thead>
          <tbody>
            {rowNumbers.map((n) => (
              <tr key={n}>
                <th scope="row" className={"h-[21px] p-0 pt-[2px] text-[#333] " + (n === 4 ? "border-r border-b border-[#c28a20] bg-[#ffd95f] font-normal" : "bg-[#dee1e6] " + head)}>{n}</th>
                {columns.map((c, ci) => {
                  const selected = n === 4 && c === "G";
                  return (
                    <td key={c} className={"relative border-r border-b border-[#dadcdd] pt-[2px] pb-0 whitespace-nowrap " + (n === 1 ? "px-0 text-center text-[15px] font-bold" : "px-[2px]")}>
                      {data[n - 1]?.[ci]}
                      {selected && (
                        <span className="pointer-events-none absolute -inset-[2px] z-10 border-[3px] border-black">
                          <span className="absolute -right-[5px] -bottom-[5px] h-[7px] w-[7px] border border-white bg-black" />
                        </span>
                      )}
                    </td>
                  );
                })}
                <td className="border-b border-[#dadcdd] p-0" />
              </tr>
            ))}
          </tbody>
        </table>
      </div>
      <div className="flex w-4 shrink-0 flex-col bg-[#dbe1ea] text-[#444]">
        <div className="flex h-[9px] items-center justify-center border border-[#888d94] bg-white"><span className="h-[2px] w-2 bg-[#8a8f96]" /></div>
        <button type="button" aria-label="Rull opp" className="flex h-4 items-center justify-center"><Tri dir="up" /></button>
        <div className="flex min-h-0 flex-1 flex-col">
          <div className="mr-px flex flex-[437] flex-col items-center justify-center gap-px rounded-[2px] border border-[#8b929c] bg-linear-to-r from-[#f3f6fa] to-[#d7dce4]">
            <span className="h-px w-2 bg-[#888]" /><span className="h-px w-2 bg-[#888]" /><span className="h-px w-2 bg-[#888]" /><span className="h-px w-2 bg-[#888]" />
          </div>
          <div className="flex-[21]" />
        </div>
        <button type="button" aria-label="Rull ned" className="flex h-[17px] items-center justify-center border-b border-[#bcc3cc]"><Tri dir="down" /></button>
      </div>
    </div>
  );
}

function SheetTabs() {
  const nav = ["M1.500 0v8M7.500 0v8L3 4z", "M6 0v8L2 4z", "M2 0v8l4-4z", "M6.500 0v8M0.500 0v8L5 4z"];
  const names = ["Første ark", "Forrige ark", "Neste ark", "Siste ark"];
  return (
    <div className="flex h-4 shrink-0 bg-[#dbe1ea]">
      <div className="flex min-w-0 flex-[576] border-t border-[#9aa2ac]">
        <div className="flex w-[62px] items-center justify-around">
          {nav.map((d, i) => (
            <button key={i} type="button" aria-label={names[i]}><svg width="8" height="8" viewBox="0 0 8 8"><path d={d} fill="#4c5158" stroke="#4c5158" strokeWidth={i === 0 || i === 3 ? 1 : 0} /></svg></button>
          ))}
        </div>
        <button type="button" className="-mt-px flex h-4 w-[48px] items-center justify-center border-l border-[#9aa2ac] bg-white font-[Lato,sans-serif] text-[14px] leading-4 font-bold text-[#444c58]">Ark1</button>
        <button type="button" aria-label="Sett inn regneark">
          <svg width="43" height="15" viewBox="0 0 43 15">
            <path d="M0 0h10L0 13z" fill="#fff" />
            <path d="M10 0L0 13v1h27L40 0z" fill="#e4e8ee" />
            <path d="M10 0L-1 14M40 0L27 14" stroke="#8d949d" fill="none" />
            <rect x="12.500" y="3.500" width="11" height="8" rx="1" fill="#dfe9fa" stroke="#4a6698" />
            <path d="M19 12.500h4.500V9" fill="#9db3dc" stroke="#4a6698" />
            <path d="M12 0.500v8M8 4.500h8M9.200 1.700l5.600 5.600M14.800 1.700L9.200 7.300" stroke="#dd8a1e" />
            <circle cx="12" cy="4.500" r="1.500" fill="#fff2c0" />
          </svg>
        </button>
      </div>
      <div className="flex min-w-0 flex-[591] text-[#444]">
        <div className="flex w-2 items-center justify-center border border-[#7b8189] bg-white"><span className="h-2 w-px bg-[#777]" /></div>
        <button type="button" aria-label="Rull til venstre" className="flex w-[18px] items-center justify-center"><Tri dir="left" /></button>
        <div className="flex min-w-0 flex-1">
          <div className="flex flex-[480] items-center justify-center gap-px rounded-[2px] border border-[#8b929c] bg-linear-to-b from-[#eef2f7] to-[#d5dae1]">
            <span className="h-[7px] w-px bg-[#888]" /><span className="h-[7px] w-px bg-[#888]" /><span className="h-[7px] w-px bg-[#888]" /><span className="h-[7px] w-px bg-[#888]" />
          </div>
          <div className="flex-[45]" />
        </div>
        <button type="button" aria-label="Rull til høyre" className="flex w-4 items-center justify-center"><Tri dir="right" /></button>
        <div className="flex w-2 items-center justify-center border border-[#7b8189] bg-white"><span className="h-2 w-px bg-[#777]" /></div>
        <div className="w-4" />
      </div>
    </div>
  );
}

function StatusBar() {
  const round = (d) => (
    <svg width="17" height="17" viewBox="0 0 17 17"><circle cx="8.500" cy="8.500" r="7.500" fill="#f7f8f9" stroke="#6c737b" /><path d={d} stroke="#444" strokeWidth="2" /></svg>
  );
  return (
    <footer className="flex h-[23px] shrink-0 items-center border-y border-t-[#8b929b] border-b-[#777c82] bg-linear-to-b from-[#e9ecef] to-[#bcc0c5] pl-2 text-[#333]">
      <span className="w-[49px]">Klar</span>
      <div className="h-[19px] w-px bg-[#878c92]" />
      <div className="ml-auto h-[19px] w-px bg-[#9a9fa5]" />
      <button type="button" aria-label="Normal" className="ml-1 flex h-[19px] w-[19px] items-center justify-center rounded-[3px] border border-[#c29a3c] bg-linear-to-b from-[#fdd67a] to-[#ffee85]">
        <svg width="13" height="11" viewBox="0 0 13 11" shapeRendering="crispEdges"><path d="M0.500 0.500h12v9h-12zM0.500 3.500h12M0.500 6.500h12M4.500 0v10M8.500 0v10" fill="#fff" stroke="#555" /></svg>
      </button>
      <button type="button" aria-label="Sideoppsett" className="ml-[3px]">
        <svg width="14" height="12" viewBox="0 0 14 12" shapeRendering="crispEdges"><rect x="0.500" y="0.500" width="12" height="11" fill="#c5c8cc" stroke="#666" /><rect x="3.500" y="2.500" width="6" height="7" fill="#fff" stroke="#666" /><path d="M5 4.500h3M5 6.500h3" stroke="#888" /></svg>
      </button>
      <button type="button" aria-label="Sideskift" className="ml-[5px]">
        <svg width="14" height="12" viewBox="0 0 14 12" shapeRendering="crispEdges"><rect x="0.500" y="0.500" width="13" height="11" fill="#b8bbc0" stroke="#666" /><path d="M1 1h4v6H1zM6 1h3v6H6z" fill="#fff" /><path d="M5.500 1v6M9.500 1v6M1 7.500h8" stroke="#666" /></svg>
      </button>
      <span className="ml-2.5 w-9 whitespace-nowrap">100 %</span>
      <button type="button" aria-label="Zoom ut" className="ml-[3px]">{round("M5 8.500h7")}</button>
      <div className="relative h-4 w-[99px]">
        <svg width="99" height="16" viewBox="0 0 99 16">
          <path d="M0 8.500h99" stroke="#7a8087" />
          <path d="M45.500 1.500h8v7l-4 4-4-4z" fill="#f4f5f6" stroke="#666c73" />
        </svg>
        <input type="range" aria-label="Zoom" min="0" max="100" defaultValue="50" className="absolute inset-0 w-full opacity-0" />
      </div>
      <button type="button" aria-label="Zoom inn">{round("M5 8.500h7M8.500 5v7")}</button>
      <svg width="12" height="12" viewBox="0 0 12 12" className="ml-1.5 self-end" shapeRendering="crispEdges">
        <path d="M9 1h2v2H9zM9 5h2v2H9zM9 9h2v2H9zM5 5h2v2H5zM5 9h2v2H5zM1 9h2v2H1z" fill="#8e949b" />
      </svg>
    </footer>
  );
}

export default function App() {
  return (
    <div className="h-screen bg-[#3a3838] font-['Open_Sans',sans-serif] text-[11px] text-[#444]">
      <div className="flex h-full flex-col overflow-hidden rounded-[7px] border border-[#2c2a2c] bg-[linear-gradient(to_right,#d2d0d0,#e6e6e6_100px,#ffffff_125px,#ffffff_940px,#f1f1f1_960px,#fafafa)] pr-1.5 pb-1.5 pl-[7px]">
        <TitleBar />
        <Tabs />
        <div className="flex min-h-0 flex-1 flex-col border-r border-[#8f969e] bg-[#dfe4ea]">
          <Ribbon />
          <FormulaBar />
          <Sheet />
          <SheetTabs />
          <StatusBar />
        </div>
      </div>
    </div>
  );
}
